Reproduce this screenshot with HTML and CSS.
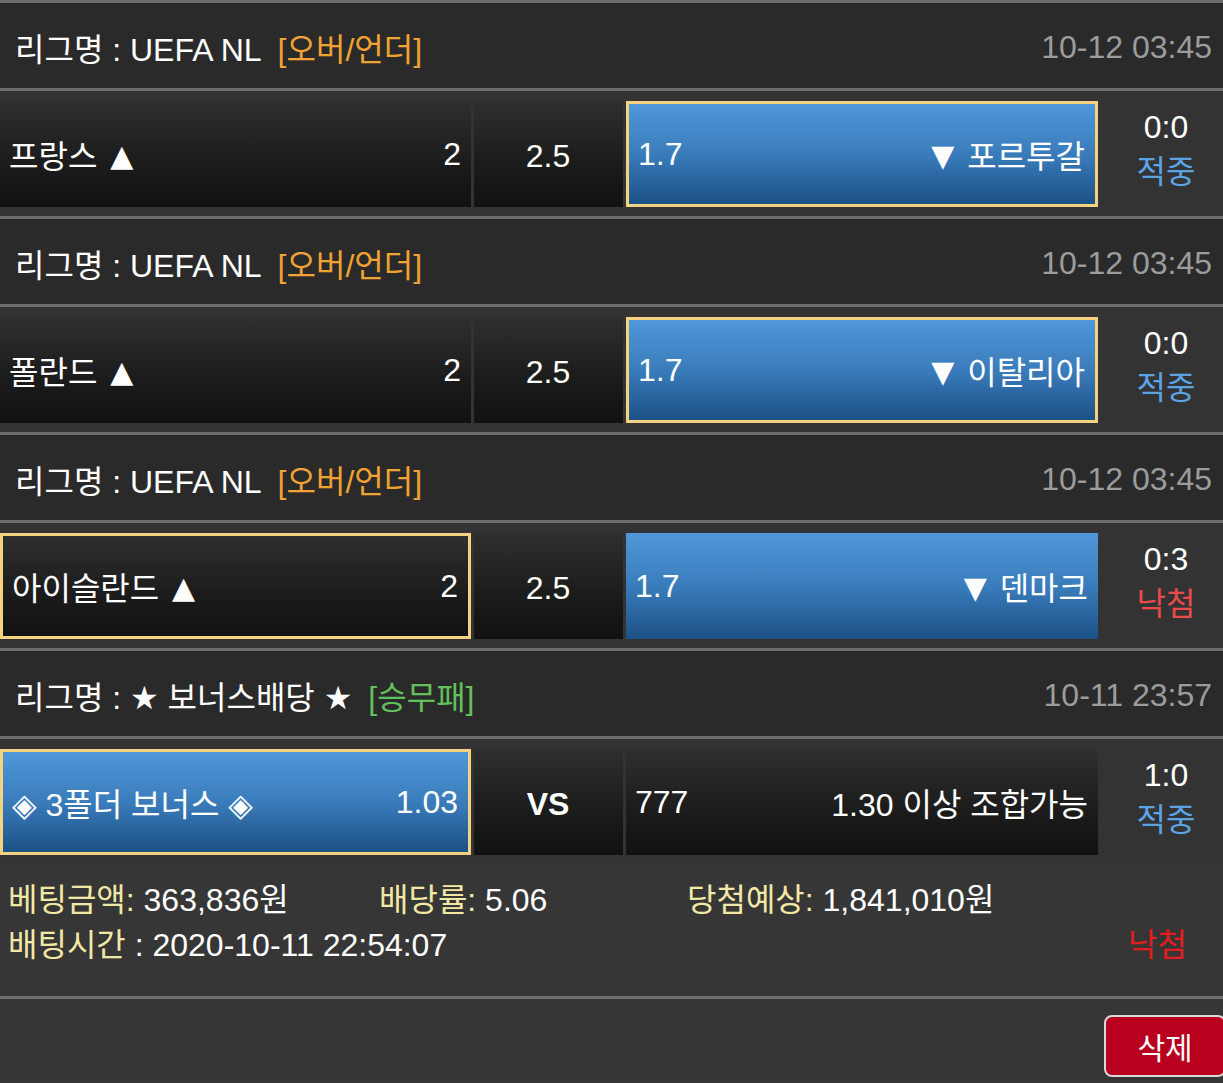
FILE: index.html
```html
<html lang="ko">
<head>
    <meta charset="UTF-8">
    <meta name="viewport" content="width=device-width, initial-scale=1.0">
    <title>배팅내역</title>
    <link rel="stylesheet" href="styles.css">
</head>
<body>
    <div class="slip">

        <div class="game">
            <div class="league">
                <span class="league-name">리그명 : UEFA NL</span>
                <span class="kind ou">[오버/언더]</span>
                <span class="time">10-12 03:45</span>
            </div>
            <div class="match">
                <div class="pick">
                    <span>프랑스 <i class="arrow up">▲</i></span>
                    <span>2</span>
                </div>
                <div class="pick mid">2.5</div>
                <div class="pick blue on">
                    <span>1.7</span>
                    <span><i class="arrow down">▼</i> 포르투갈</span>
                </div>
                <div class="result">
                    <span class="score">0:0</span>
                    <span class="hit">적중</span>
                </div>
            </div>
        </div>

        <div class="game">
            <div class="league">
                <span class="league-name">리그명 : UEFA NL</span>
                <span class="kind ou">[오버/언더]</span>
                <span class="time">10-12 03:45</span>
            </div>
            <div class="match">
                <div class="pick">
                    <span>폴란드 <i class="arrow up">▲</i></span>
                    <span>2</span>
                </div>
                <div class="pick mid">2.5</div>
                <div class="pick blue on">
                    <span>1.7</span>
                    <span><i class="arrow down">▼</i> 이탈리아</span>
                </div>
                <div class="result">
                    <span class="score">0:0</span>
                    <span class="hit">적중</span>
                </div>
            </div>
        </div>

        <div class="game">
            <div class="league">
                <span class="league-name">리그명 : UEFA NL</span>
                <span class="kind ou">[오버/언더]</span>
                <span class="time">10-12 03:45</span>
            </div>
            <div class="match">
                <div class="pick on">
                    <span>아이슬란드 <i class="arrow up">▲</i></span>
                    <span>2</span>
                </div>
                <div class="pick mid">2.5</div>
                <div class="pick blue">
                    <span>1.7</span>
                    <span><i class="arrow down">▼</i> 덴마크</span>
                </div>
                <div class="result">
                    <span class="score">0:3</span>
                    <span class="miss">낙첨</span>
                </div>
            </div>
        </div>

        <div class="game">
            <div class="league">
                <span class="league-name">리그명 : ★ 보너스배당 ★</span>
                <span class="kind wdl">[승무패]</span>
                <span class="time">10-11 23:57</span>
            </div>
            <div class="match">
                <div class="pick blue on">
                    <span>◈ 3폴더 보너스 ◈</span>
                    <span>1.03</span>
                </div>
                <div class="pick mid vs">VS</div>
                <div class="pick">
                    <span>777</span>
                    <span>1.30 이상 조합가능</span>
                </div>
                <div class="result">
                    <span class="score">1:0</span>
                    <span class="hit">적중</span>
                </div>
            </div>
        </div>

        <div class="summary">
            <div class="sum-row">
                <span class="sum-cell"><em>베팅금액:</em> 363,836원</span>
                <span class="sum-cell"><em>배당률:</em> 5.06</span>
                <span class="sum-cell"><em>당첨예상:</em> 1,841,010원</span>
            </div>
            <div class="sum-row last">
                <span><em>배팅시간</em> : 2020-10-11 22:54:07</span>
                <span class="total-miss">낙첨</span>
            </div>
        </div>

        <div class="actions">
            <button class="delete" type="button">삭제</button>
        </div>
    </div>
</body>
</html>
```

FILE: styles.css
```css
html, body{
    margin: 0;
    padding: 0;
    background-color: #333333;
    overflow-x: hidden;
}

body{
    font-family: "Liberation Sans", "DejaVu Sans", "Noto Sans CJK KR", sans-serif;
    font-size: 32px;
    color: #ffffff;
}

.game{
    border-top: 3px solid #6d6d6d;
}

.league{
    display: flex;
    align-items: center;
    height: 88px;
    padding: 3px 11px 0 15px;
    box-sizing: border-box;
    background-color: #2a2a2a;
    border-bottom: 3px solid #6d6d6d;
}
.league-name{
    margin-right: 16px;
}
.kind.ou{
    color: #f0a233;
}
.kind.wdl{
    color: #62c05c;
}
.time{
    margin-left: auto;
    color: #9c9c9c;
}

.match{
    display: grid;
    grid-template-columns: 471px 149px 472px 1fr;
    column-gap: 3px;
    height: 125px;
    padding: 10px 0 9px;
    box-sizing: border-box;
    background-color: #333333;
}

.pick{
    display: flex;
    align-items: center;
    justify-content: space-between;
    padding: 0 10px 0 9px;
    box-sizing: border-box;
    background-image: linear-gradient(to bottom, #2f2f2f 0%, #1b1b1b 60%, #111111 100%);
}
.pick.blue{
    background-image: linear-gradient(to bottom, #4f98da 0%, #3a7cbb 50%, #1b5186 100%);
}
.pick.on{
    border: 3px solid #f3d37f;
    padding: 0 10px 0 9px;
}
.pick.mid{
    justify-content: center;
    padding-top: 4px;
}
.pick.vs{
    font-weight: bold;
}
.arrow{
    font-style: normal;
    font-family: "DejaVu Sans", sans-serif;
    font-size: 30px;
    vertical-align: 2px;
}
.arrow.up{
    margin-left: 4px;
}
.arrow.down{
    margin-right: 4px;
}

.result{
    display: flex;
    flex-direction: column;
    align-items: center;
    justify-content: center;
    line-height: 45px;
    padding: 0 0 8px 8px;
}
.hit{
    color: #5ba3e2;
}
.miss{
    color: #e94a4a;
}

.summary{
    padding: 14px 36px 22px 8px;
    border-bottom: 3px solid #6d6d6d;
    background-color: #363636;
}
.sum-row{
    display: grid;
    grid-template-columns: 371px 308px auto;
    line-height: 45px;
}
.sum-row.last{
    display: flex;
    justify-content: space-between;
    padding-bottom: 6px;
}
.summary em{
    font-style: normal;
    color: #f2e8a6;
}
.total-miss{
    color: #e31d1d;
}

.actions{
    display: flex;
    justify-content: flex-end;
    padding-top: 16px;
    height: 84px;
    box-sizing: border-box;
    background-color: #363636;
}
.delete{
    width: 122px;
    height: 62px;
    margin-right: -3px;
    border: 2px solid #d9d9d9;
    border-radius: 8px;
    background-color: #b8001f;
    color: #ffffff;
    font-family: "Liberation Sans", "Noto Sans CJK KR", sans-serif;
    font-size: 30px;
    padding: 0;
}
```
